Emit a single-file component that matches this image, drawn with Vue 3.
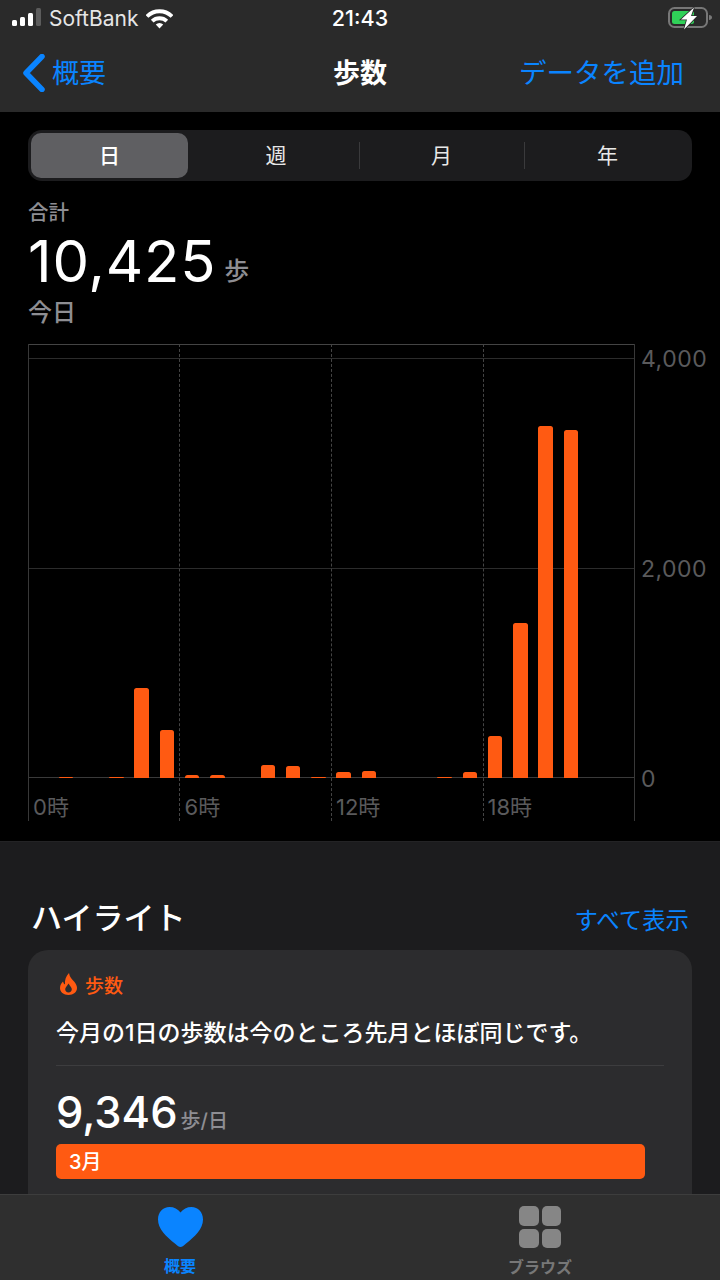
<template>
  <div class="screen">
    <header class="top">
      <div class="status">
        <div class="status-left">
          <div class="signal">
            <i v-for="(h, i) in signalBars" :key="i" :class="{ off: i === 3 }" :style="{ height: h + 'px' }"></i>
          </div>
          <span class="carrier">SoftBank</span>
          <svg class="wifi" width="27" height="21" viewBox="0 0 27 21">
            <path d="M1 8.500A17.500 17.500 0 0 1 26 8.500" fill="none" stroke="#fff" stroke-width="3.800" />
            <path d="M6.200 13.200A10.500 10.500 0 0 1 20.800 13.200" fill="none" stroke="#fff" stroke-width="3.800" />
            <path d="M13.500 20.500L9.800 16.600A5.200 5.200 0 0 1 17.200 16.600Z" fill="#fff" />
          </svg>
        </div>
        <span class="clock">21:43</span>
        <svg class="battery" width="46" height="24" viewBox="0 0 46 24">
          <rect x="2" y="2" width="38" height="19" rx="5.500" fill="none" stroke="#777" stroke-width="2" />
          <rect x="5" y="5" width="22" height="13" rx="2.500" fill="#30d158" />
          <path d="M42 9c2 .3 3 1.200 3 2.500s-1 2.200-3 2.500z" fill="#777" />
          <path d="M27 1.500L14 13.500H20L17 23.500L30 10H24Z" fill="#fff" stroke="#2a2a2a" stroke-width="1.600" paint-order="stroke" />
        </svg>
      </div>
      <nav class="navbar">
        <div class="nav-back">
          <svg width="24" height="38" viewBox="0 0 24 38">
            <path d="M21 2.500L5 19L21 35.500" fill="none" stroke="#0a84ff" stroke-width="5.500" stroke-linecap="round" stroke-linejoin="round" />
          </svg>
          <span>概要</span>
        </div>
        <h1 class="nav-title">歩数</h1>
        <span class="nav-add">データを追加</span>
      </nav>
    </header>

    <main class="content">
      <section class="summary">
        <div class="segments">
          <div v-for="(s, i) in segments" :key="s" class="segment" :class="{ active: i === 0, divided: i > 1 }">{{ s }}</div>
        </div>
        <div class="total-label">合計</div>
        <div class="total"><strong>10,425</strong><span>歩</span></div>
        <div class="total-label today">今日</div>

        <div class="chart">
          <div class="plot">
            <div class="hline top-line"></div>
            <div class="hline" style="top: 14px"></div>
            <div class="hline" style="top: 224px"></div>
            <div class="hline base" style="top: 433px"></div>
            <div class="vline solid" style="left: 0"></div>
            <div class="vline" v-for="x in [151, 303, 455]" :key="x" :style="{ left: x + 'px' }"></div>
            <div class="vline solid" style="left: 606px"></div>
            <span class="y-label" style="top: 1px">4,000</span>
            <span class="y-label" style="top: 211px">2,000</span>
            <span class="y-label" style="top: 421px">0</span>

            <div class="bars">
              <div v-for="(v, i) in hourly" :key="i" class="bar-cell">
                <div v-if="v" class="bar" :style="{ height: v * 0.105 + 'px' }"></div>
              </div>
            </div>
          </div>
          <div class="x-labels">
            <span v-for="l in xLabels" :key="l">{{ l }}</span>
          </div>
        </div>
      </section>

      <section class="highlights">
        <div class="section-head">
          <h2>ハイライト</h2>
          <span>すべて表示</span>
        </div>
        <div class="card">
          <div class="card-head">
            <svg width="17" height="22" viewBox="0 0 17 22">
              <path fill-rule="evenodd" fill="#ff5a12" d="M9 0C9.500 4 12 6 14.500 9C16 11 17 13 17 15C17 19 13.500 22 8.500 22C3.500 22 0 19 0 15C0 12 1.500 10 3 8.500C3.500 10 4 11 5 11.500C4.500 7 6 3 9 0ZM8.500 19.500C6.500 19.500 5.200 18 5.200 16.300C5.200 14.500 7 13 8.500 10.500C10 13 11.800 14.500 11.800 16.300C11.800 18 10.500 19.500 8.500 19.500Z" />
            </svg>
            <span>歩数</span>
          </div>
          <p class="card-text">今月の1日の歩数は今のところ先月とほぼ同じです。</p>
          <div class="card-stat"><strong>9,346</strong><span>歩/日</span></div>
          <div class="month-bar">3月</div>
        </div>
      </section>
    </main>

    <footer class="tabbar">
      <div class="tab active">
        <svg width="45" height="40" viewBox="0 0 45 40">
          <path fill="#0a84ff" d="M22.500 40C21 40 19.500 38.800 17.500 37C8 29.500 0 22 0 12.500C0 5 5 0 11.500 0C16 0 20 2 22.500 5.500C25 2 29 0 33.500 0C40 0 45 5 45 12.500C45 22 37 29.500 27.500 37C25.500 38.800 24 40 22.500 40Z" />
        </svg>
        <span>概要</span>
      </div>
      <div class="tab">
        <div class="tile-grid"><i></i><i></i><i></i><i></i></div>
        <span>ブラウズ</span>
      </div>
    </footer>
  </div>
</template>

<script setup>
const signalBars = [6, 9, 13, 18]
const segments = ['日', '週', '月', '年']
const xLabels = ['0時', '6時', '12時', '18時']

// steps per hour, read off the chart
const hourly = [
  0, 10, 0, 10, 857, 457, 29, 24, 0, 124, 114, 10,
  57, 67, 0, 0, 14, 57, 400, 1476, 3352, 3314, 0, 0
]
</script>

<style scoped>
.screen {
  width: 720px;
  height: 1280px;
  display: flex;
  flex-direction: column;
  overflow: hidden;
  background: #000;
  color: #fff;
  font-family: Inter, "Noto Sans CJK JP", sans-serif;
}

.top {
  height: 112px;
  flex: none;
  background: #2a2a2a;
}

.status {
  height: 36px;
  display: flex;
  align-items: center;
  justify-content: space-between;
  padding: 0 7px 0 12px;
  position: relative;
}

.status-left {
  display: flex;
  align-items: center;
}

.signal {
  display: flex;
  align-items: flex-end;
  gap: 3px;
  margin-bottom: 2px;
}

.signal i {
  display: block;
  width: 5px;
  border-radius: 1.500px;
  background: #fff;
}

.signal i.off {
  background: #5c5c5c;
}

.carrier {
  margin-left: 8px;
  font-size: 21px;
  color: #e6e6e6;
}

.wifi {
  margin-left: 8px;
}

.clock {
  position: absolute;
  left: 0;
  right: 0;
  text-align: center;
  font-size: 21.500px;
  font-weight: 500;
}

.navbar {
  height: 76px;
  box-sizing: border-box;
  display: flex;
  align-items: center;
  justify-content: space-between;
  padding: 0 36px 2px 21px;
  position: relative;
}

.nav-back {
  display: flex;
  align-items: center;
  gap: 7px;
  font-size: 27px;
  color: #0a84ff;
}

.nav-back span {
  margin-bottom: 4px;
}

.nav-title {
  position: absolute;
  left: 0;
  right: 0;
  margin: 0 0 4px;
  text-align: center;
  font-size: 27px;
  font-weight: 700;
}

.nav-add {
  margin-bottom: 4px;
  font-size: 27.500px;
  color: #0a84ff;
}

.content {
  flex: 1;
  min-height: 0;
  overflow: hidden;
}

.summary {
  height: 729px;
  padding: 18px 28px 0;
  box-sizing: border-box;
  background: #000;
}

.segments {
  height: 51px;
  padding: 3px;
  box-sizing: border-box;
  display: grid;
  grid-template-columns: 157px 171px 165px 165px;
  background: #1c1c1e;
  border-radius: 14px;
}

.segment {
  display: flex;
  align-items: center;
  justify-content: center;
  padding-bottom: 4px;
  font-size: 21px;
  color: #e8e8e8;
  position: relative;
}

.segment:nth-child(2) {
  padding-left: 5px;
}

.segment:nth-child(4) {
  padding-left: 2px;
}

.segment.active {
  background: #5f5f62;
  border-radius: 10px;
  color: #fff;
  font-weight: 500;
}

.segment.divided::before {
  content: "";
  position: absolute;
  left: 0;
  top: 9px;
  bottom: 9px;
  width: 1px;
  background: #3a3a3c;
}

.total-label {
  margin-top: 18px;
  height: 28px;
  line-height: 27px;
  font-size: 20.500px;
  font-weight: 500;
  color: #8e8e93;
}

.total-label.today {
  margin-top: 0;
  height: 26px;
  line-height: 26px;
  font-size: 24px;
}

.total {
  height: 69px;
  margin-bottom: 4px;
  display: flex;
  align-items: baseline;
  line-height: 69px;
}

.total strong {
  font-size: 58px;
  font-weight: 400;
  letter-spacing: 0.800px;
}

.total span {
  margin-left: 8px;
  font-size: 25px;
  font-weight: 500;
  color: #8e8e93;
  transform: translateY(-2px);
}

.chart {
  margin-top: 18px;
  width: 607px;
}

.plot {
  position: relative;
  height: 434px;
}

.hline {
  position: absolute;
  left: 0;
  width: 606px;
  height: 1px;
  background: #2c2c2c;
}

.hline.top-line {
  top: 0;
  width: 607px;
  background: #444;
}

.hline.base {
  background: #3a3a3a;
}

.vline {
  position: absolute;
  top: 0;
  height: 477px;
  border-left: 1px dashed #444;
}

.vline.solid {
  border-left: 1px solid #383838;
}

.y-label {
  position: absolute;
  left: 613px;
  height: 28px;
  line-height: 28px;
  font-size: 23px;
  letter-spacing: 0.500px;
  color: #5a5a5c;
  white-space: nowrap;
}

.bars {
  position: absolute;
  left: 0;
  right: 1px;
  bottom: 0;
  height: 434px;
  display: grid;
  grid-template-columns: repeat(24, 1fr);
  align-items: end;
}

.bar-cell {
  padding: 0 5.300px;
}

.bar {
  background: #ff5a12;
  border-radius: 2.500px 2.500px 0 0;
}

.x-labels {
  height: 43px;
  display: grid;
  grid-template-columns: repeat(4, 151.500px);
}

.x-labels span {
  padding: 16px 0 0 5px;
  font-size: 22px;
  line-height: 26px;
  color: #5a5a5c;
}

.highlights {
  height: 400px;
  padding: 0 28px;
  background: #1c1c1e;
  border-top: 1px solid #232325;
  box-sizing: border-box;
}

.section-head {
  height: 108px;
  padding: 0 3px 0 3px;
  display: flex;
  align-items: flex-end;
  justify-content: space-between;
}

.section-head h2 {
  margin: 0 0 10px;
  font-size: 31px;
  line-height: 44px;
  font-weight: 500;
}

.section-head span {
  margin-bottom: 13px;
  font-size: 23.400px;
  line-height: 32px;
  color: #0a84ff;
}

.card {
  padding: 0 28px;
  height: 300px;
  background: #2c2c2e;
  border-radius: 20px 20px 0 0;
}

.card-head {
  display: flex;
  align-items: center;
  gap: 8px;
  height: 28px;
  padding: 20px 0 0 4px;
  font-size: 19px;
  font-weight: 500;
  color: #ff5a12;
}

.card-text {
  margin: 0;
  padding: 19px 0 16px;
  border-bottom: 1px solid #3d3d3f;
  font-size: 23px;
  line-height: 32px;
  font-weight: 500;
}

.card-stat {
  height: 78px;
  display: flex;
  align-items: baseline;
  line-height: 92px;
}

.card-stat strong {
  font-size: 43.500px;
  font-weight: 500;
}

.card-stat span {
  margin-left: 3px;
  font-size: 20px;
  font-weight: 500;
  color: #8e8e93;
}

.month-bar {
  width: 589px;
  height: 35px;
  padding-left: 13px;
  box-sizing: border-box;
  background: #ff5a12;
  border-radius: 5px;
  font-size: 20px;
  font-weight: 500;
  line-height: 36px;
}

.tabbar {
  height: 86px;
  flex: none;
  box-sizing: border-box;
  display: grid;
  grid-template-columns: 1fr 1fr;
  background: #2f2f2f;
  border-top: 1px solid #3d3d3d;
}

.tab {
  display: flex;
  flex-direction: column;
  align-items: center;
  padding-top: 12px;
  font-size: 16px;
  font-weight: 700;
  color: #777;
}

.tab.active {
  color: #0a84ff;
}

.tab span {
  margin-top: 7px;
  line-height: 24px;
}

.tile-grid {
  width: 42px;
  height: 42px;
  display: grid;
  grid-template-columns: 1fr 1fr;
  gap: 3px;
  margin-top: -1px;
}

.tile-grid i {
  display: block;
  background: #868686;
  border-radius: 5px;
}
</style>

<style>
html,
body {
  margin: 0;
  background: #000;
}
</style>
